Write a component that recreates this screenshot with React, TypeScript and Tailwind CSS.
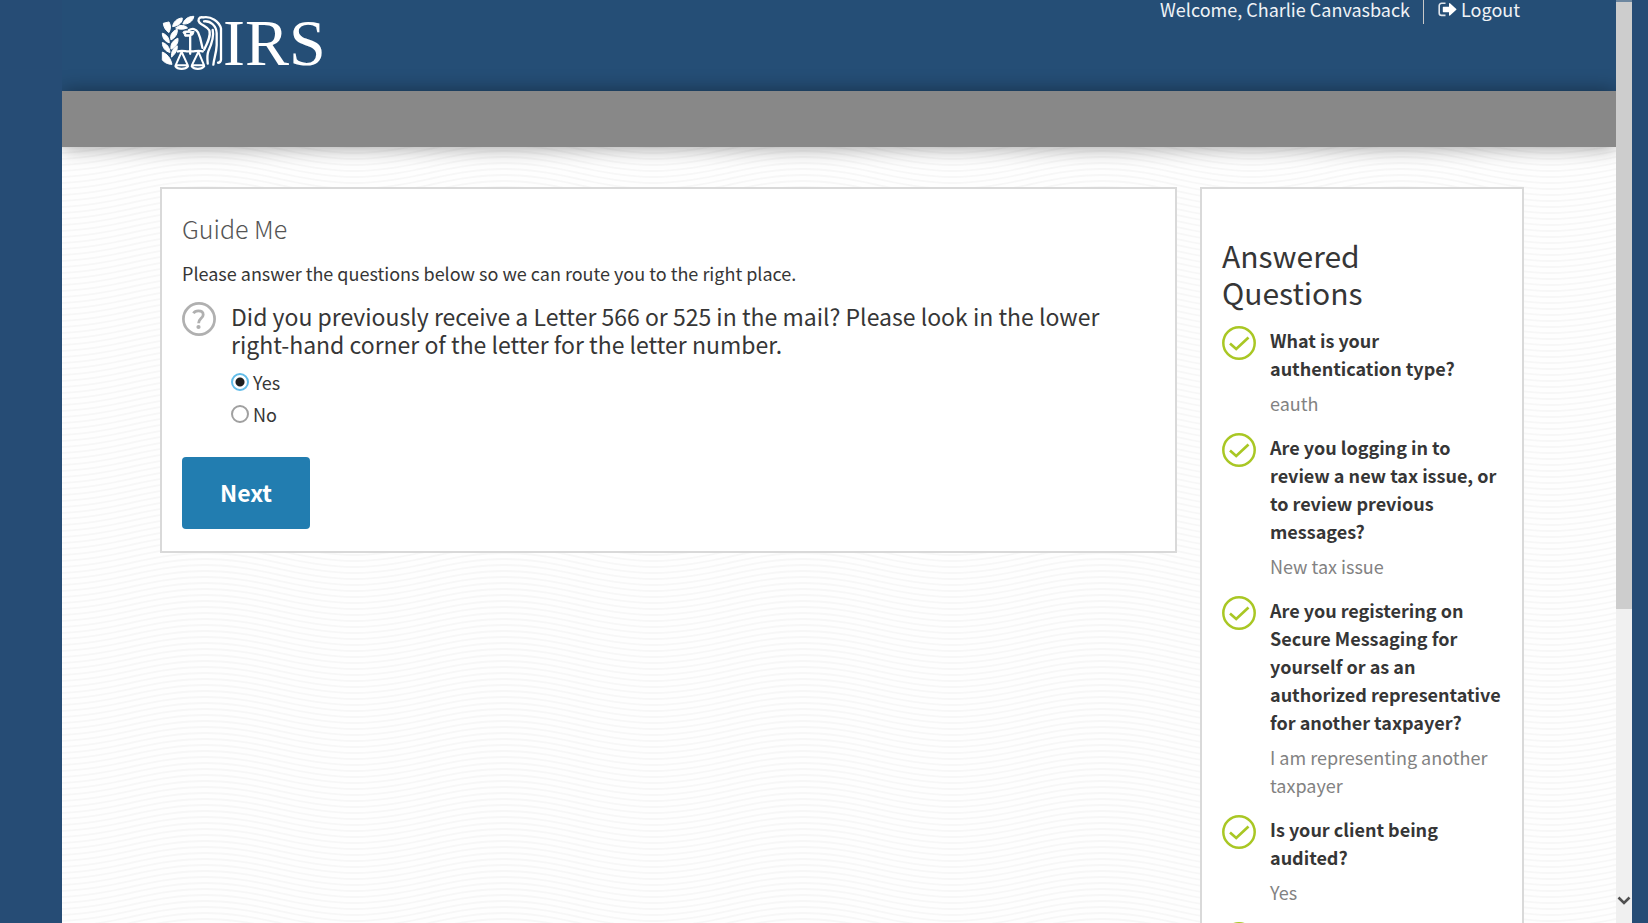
import { useState } from "react";

type Answer = { question: string; answer: string };

const answered: Answer[] = [
  { question: "What is your authentication type?", answer: "eauth" },
  {
    question: "Are you logging in to review a new tax issue, or to review previous messages?",
    answer: "New tax issue",
  },
  {
    question:
      "Are you registering on Secure Messaging for yourself or as an authorized representative for another taxpayer?",
    answer: "I am representing another taxpayer",
  },
  { question: "Is your client being audited?", answer: "Yes" },
];

function Emblem() {
  return (
    <svg viewBox="63 43 185 169" className="h-14 w-[62px] shrink-0" aria-hidden="true">
      <g fill="#fff" stroke="#fff" strokeWidth="3" strokeLinejoin="round">
        <path d="M161 47 C159 62 144 72 128 70 C132 56 144 47 161 47Z" />
        <path d="M126 52 C128 64 116 76 97 78 C99 64 110 53 126 52Z" />
        <path d="M118 75 C130 73 138 77 142 82 C128 88 114 86 106 82Z" />
        <path d="M69 68 L86 64 C92 74 92 84 86 96 C76 90 70 80 69 68Z" />
        <path d="M111 86 C113 99 105 112 92 118 C88 105 95 92 111 86Z" />
        <path d="M66 98 C80 102 87 113 87 127 C74 123 66 113 66 98Z" />
        <path d="M113 113 C115 128 107 140 92 146 C90 131 98 119 113 113Z" />
        <path d="M66 126 C80 130 88 141 89 156 C76 153 66 142 66 126Z" />
        <path d="M111 136 C113 148 105 160 94 170 C92 155 98 143 111 136Z" />
        <path d="M66 155 C80 160 91 173 95 192 C82 192 68 184 66 178Z" />
        <path d="M128 95 C132 90 140 91 146 92 L162 93 L158 103 L146 107 L134 107 L132 101Z" />
      </g>
      <g fill="none" stroke="#fff" strokeWidth="7" strokeLinejoin="round" strokeLinecap="round">
        <path d="M150 106 V160" />
        <path d="M113 153 C128 147 140 156 150 152 C160 156 172 147 188 153" />
        <path d="M124 154 L106 195 H143 Z" strokeWidth="6" />
        <path d="M175 154 L155 195 H192 Z" strokeWidth="6" />
        <path d="M106 198 C112 208 136 208 143 198" />
        <path d="M155 198 C162 208 184 208 192 198" />
        <path d="M146 89 C156 82 168 84 174 96 L180 112 L187 142" />
        <path d="M188 50 C176 48 172 58 178 66 C188 76 202 78 208 90 C213 106 202 128 192 148" />
        <path d="M190 50 C212 46 238 62 243 84 V178 C242 184 238 187 234 187" />
        <path d="M192 62 C212 60 229 76 230 98 V134 C229 160 221 176 220 193" />
        <path d="M218 88 C223 110 214 132 205 152 C200 164 202 178 203 190" />
      </g>
      <path d="M138 99 H149" stroke="#254d75" strokeWidth="4" />
    </svg>
  );
}

function LogoutIcon() {
  return (
    <svg viewBox="0 0 19 15" className="h-[15px] w-[19px]" aria-hidden="true">
      <path d="M7.5 1.3 H3.6 A2.4 2.4 0 0 0 1.2 3.7 V11 A2.4 2.4 0 0 0 3.6 13.4 H7.5" fill="none" stroke="#dfe5ec" strokeWidth="1.6" />
      <path d="M5.4 4.7 H11 V1.4 Q11.3 .7 12 1.2 L18.3 7 Q18.7 7.4 18.3 7.8 L12 13.5 Q11.3 14 11 13.3 V10.2 H5.4 Q4.8 10.2 4.8 9.6 V5.3 Q4.8 4.7 5.4 4.7Z" fill="#fff" />
    </svg>
  );
}

function CheckIcon() {
  return (
    <svg viewBox="0 0 34 34" className="h-[34px] w-[34px] shrink-0" fill="none" stroke="#a9c724" aria-hidden="true">
      <circle cx="17" cy="17" r="15.7" strokeWidth="2.5" />
      <path d="M8 17.5 L14.2 23 L26.5 11.5" strokeWidth="2.7" />
    </svg>
  );
}

function QuestionIcon() {
  return (
    <svg viewBox="0 0 34 34" className="h-[34px] w-[34px] shrink-0" fill="none" stroke="#b0b0b0" aria-hidden="true">
      <circle cx="17" cy="17" r="15.6" strokeWidth="2.7" />
      <path d="M11.4 11.2 C12.4 9.6 14.2 8.9 16.3 8.9 C19.6 8.9 21.2 10.5 21.2 12.7 C21.2 16.4 16.6 16.4 16.6 21.2" strokeWidth="2.8" />
      <circle cx="16.5" cy="25" r="2.1" fill="#b0b0b0" stroke="none" />
    </svg>
  );
}

function Waves() {
  return (
    <svg className="absolute inset-0 h-full w-full" aria-hidden="true">
      <defs>
        <pattern id="waves" width="299" height="6" patternUnits="userSpaceOnUse" patternTransform="translate(143 1)">
          <g fill="none" stroke="#f7f7f7" strokeWidth="1.8">
            {[-21, -15, -9, -3, 3, 9].map((y) => (
              <path key={y} d={`M-150 ${y + 20} C-95 ${y + 20} -55 ${y} 0 ${y} S95 ${y + 20} 149.5 ${y + 20} S244 ${y} 299 ${y} S394 ${y + 20} 449 ${y + 20}`} />
            ))}
          </g>
        </pattern>
      </defs>
      <rect width="100%" height="100%" fill="url(#waves)" />
    </svg>
  );
}

export default function App() {
  const [choice, setChoice] = useState("Yes");

  return (
    <div className="flex h-screen bg-[#264c75] pr-4 pl-[62px] font-['Noto_Sans_CJK_SC',sans-serif] text-lg text-[#363636]">
      <div className="flex min-w-0 flex-1 flex-col overflow-hidden bg-[#fefefe]">
        <header className="flex h-[91px] shrink-0 items-start justify-between bg-[#254e76] pr-24 pl-[99px] text-white">
          <a href="#home" aria-label="IRS home" className="flex items-center pt-[15px]">
            <Emblem />
            <span className="font-['Liberation_Serif',serif] text-[66px] leading-[56px]">IRS</span>
          </a>
          <div className="flex h-6 text-lg leading-[18px] text-[#f0f3f6]">
            <span className="border-r border-[#c8c8c8] pr-[13px]">Welcome, Charlie Canvasback</span>
            <a href="#logout" className="flex h-[18px] items-center gap-1 pl-[14px]">
              <LogoutIcon />
              Logout
            </a>
          </div>
        </header>
        <div className="relative z-10 h-14 shrink-0 bg-[#888] shadow-[0_0_20px_rgba(0,0,0,0.4)]" />
        <main className="relative min-h-0 flex-1 pt-10 pr-[92px] pl-[98px]">
          <Waves />
          <div className="relative grid grid-cols-[minmax(0,1fr)_324px] items-start gap-[23px]">
            <section className="border-2 border-[#d9d9d9] bg-white px-5 pt-5 pb-[22px]">
              <h1 className="text-[25px] leading-[38px] font-light text-[#555]">Guide Me</h1>
              <p className="mt-3 leading-7">Please answer the questions below so we can route you to the right place.</p>
              <form onSubmit={(e) => e.preventDefault()}>
                <fieldset>
                  <div className="mt-[15px] flex gap-[15px]">
                    <QuestionIcon />
                    <div>
                      <p id="question" className="text-[23px] leading-7">
                        Did you previously receive a Letter 566 or 525 in the mail? Please look in the lower right-hand corner
                        of the letter for the letter number.
                      </p>
                      <div role="radiogroup" aria-labelledby="question" className="mt-2">
                        {["Yes", "No"].map((option) => (
                          <label key={option} className="flex h-8 items-center gap-1">
                            <input
                              type="radio"
                              name="letter"
                              value={option}
                              checked={choice === option}
                              onChange={() => setChoice(option)}
                              className="h-[18px] w-[18px] appearance-none rounded-full border-2 border-[#a0a0a0] bg-white checked:border-[#63bde9] checked:bg-[radial-gradient(circle,#1f1f1f_4px,transparent_5px)]"
                            />
                            {option}
                          </label>
                        ))}
                      </div>
                    </div>
                  </div>
                </fieldset>
                <button type="submit" className="mt-[27px] h-[72px] w-32 rounded bg-[#227db0] text-[23px] font-bold text-white">
                  Next
                </button>
              </form>
            </section>
            <aside className="border-2 border-[#d9d9d9] bg-white px-5 pt-12 pb-5">
              <h2 className="w-48 text-[30px] leading-[37px]">Answered Questions</h2>
              <ul className="mt-[15px] flex flex-col gap-4">
                {answered.map((item) => (
                  <li key={item.question} className="flex gap-[14px]">
                    <CheckIcon />
                    <div className="leading-7">
                      <p className="font-bold">{item.question}</p>
                      <p className="mt-[7px] text-[#828282]">{item.answer}</p>
                    </div>
                  </li>
                ))}
                <li className="flex gap-[14px]">
                  <CheckIcon />
                </li>
              </ul>
            </aside>
          </div>
        </main>
      </div>
      <div className="flex w-4 flex-col items-center justify-between bg-[#f0f0f0]">
        <div className="h-[66%] w-full border-t-2 border-[#6d87a0] bg-[#cdcdcd]" />
        <svg viewBox="0 0 14 10" className="mb-[17px] h-[10px] w-[14px]" aria-hidden="true">
          <path d="M1.5 1.5 L7 7 L12.5 1.5" fill="none" stroke="#505050" strokeWidth="2.6" />
        </svg>
      </div>
    </div>
  );
}
